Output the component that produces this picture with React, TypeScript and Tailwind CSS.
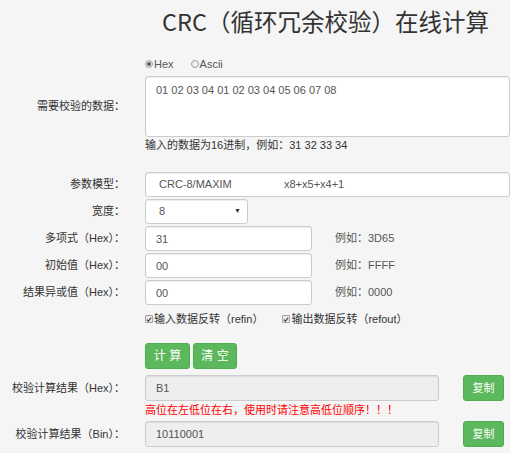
import React from "react";

const labelCls = "w-[130px] shrink-0 pr-[5px] text-right text-[11px] text-[#333]";
const inputCls =
  "h-[25px] rounded-[3px] border border-[#ccc] px-[10px] text-[11px] text-[#555] shadow-[inset_0_1px_1px_rgba(0,0,0,0.075)] outline-none";

function Radio({ checked, label }: { checked?: boolean; label: string }) {
  return (
    <label className="flex items-center">
      <span className="flex h-[8px] w-[8px] items-center justify-center rounded-full border border-[#a0a0a0] bg-[#f0f0f0]">
        {checked && <span className="h-[4px] w-[4px] rounded-full bg-[#555]" />}
      </span>
      <span className="ml-px">{label}</span>
    </label>
  );
}

function Check({ label }: { label: string }) {
  return (
    <label className="flex items-center">
      <span className="flex h-[8px] w-[8px] items-center justify-center rounded-[1px] border border-[#a0a0a0] bg-[#e8e8e8]">
        <svg viewBox="0 0 8 8" className="h-[7px] w-[7px]">
          <path d="M1.2 4.2 L3.2 6.2 L6.8 1.6" fill="none" stroke="#333" strokeWidth="1.4" />
        </svg>
      </span>
      <span className="ml-px">{label}</span>
    </label>
  );
}

function ParamRow({ label, value, example }: { label: string; value: string; example: string }) {
  return (
    <div className="mt-[2px] flex items-center">
      <div className={labelCls}>{label}</div>
      <input className={`${inputCls} ml-[15px] w-[167px] bg-white`} defaultValue={value} />
      <span className="ml-[23px] text-[11px] text-[#555]">{example}</span>
    </div>
  );
}

function ResultRow({ label, value }: { label: string; value: string }) {
  return (
    <div className="flex items-center">
      <div className={labelCls}>{label}</div>
      <input
        readOnly
        className={`${inputCls} ml-[15px] h-[26px] w-[294px] bg-[#eee]`}
        defaultValue={value}
      />
      <button className="ml-[24px] h-[26px] w-[41px] rounded-[3px] border border-[#4cae4c] bg-[#5cb85c] text-[11px] text-white">
        复制
      </button>
    </div>
  );
}

export default function App() {
  return (
    <div
      className="min-h-screen w-[510px] overflow-hidden bg-[#f5f5f5] text-[11px] text-[#333]"
      style={{ fontFamily: '"Liberation Sans", "Noto Sans CJK SC", sans-serif' }}
    >
      <h1
        className="pl-[162px] pt-[6px] text-[23.5px] font-normal leading-[30px] whitespace-nowrap text-[#333]"
        style={{ fontFamily: '"Noto Sans CJK SC", sans-serif' }}
      >
        CRC（循环冗余校验）在线计算
      </h1>

      {/* 数据输入 */}
      <div className="mt-[21px] flex h-[14px] items-center gap-[17px] pl-[145px] text-[#555]">
        <Radio checked label="Hex" />
        <Radio label="Ascii" />
      </div>
      <div className="mt-[5px] flex items-center">
        <div className={labelCls}>需要校验的数据：</div>
        <textarea
          className={`${inputCls} ml-[15px] h-[61px] w-[420px] resize-none bg-white pt-[5px] leading-[16px]`}
          defaultValue="01 02 03 04 01 02 03 04 05 06 07 08"
        />
      </div>
      <div className="mt-px flex h-[14px] items-center pl-[145px] text-[#333]">
        输入的数据为16进制，例如：31 32 33 34
      </div>

      {/* 参数 */}
      <div className="mt-[20px] flex items-center">
        <div className={labelCls}>参数模型：</div>
        <div className={`${inputCls} ml-[15px] flex w-[420px] items-center bg-white pl-[13px]`}>
          <span className="w-[125px]">CRC-8/MAXIM</span>
          <span>x8+x5+x4+1</span>
        </div>
      </div>
      <div className="mt-[2px] flex items-center">
        <div className={labelCls}>宽度：</div>
        <div className={`${inputCls} ml-[15px] flex w-[103px] items-center justify-between bg-white pl-[13px] pr-[6px]`}>
          <span>8</span>
          <span className="text-[7px] text-[#333]">▼</span>
        </div>
      </div>
      <ParamRow label="多项式（Hex）：" value="31" example="例如：3D65" />
      <ParamRow label="初始值（Hex）：" value="00" example="例如：FFFF" />
      <ParamRow label="结果异或值（Hex）：" value="00" example="例如：0000" />

      <div className="mt-[7px] flex h-[14px] items-center gap-[19px] pl-[145px] text-[#333]">
        <Check label="输入数据反转（refin）" />
        <Check label="输出数据反转（refout）" />
      </div>

      {/* 操作 */}
      <div className="mt-[17px] flex gap-[3px] pl-[145px]">
        <button className="h-[26px] w-[45px] rounded-[3px] border border-[#4cae4c] bg-[#5cb85c] text-[12px] text-white">
          计 算
        </button>
        <button className="h-[26px] w-[44px] rounded-[3px] border border-[#4cae4c] bg-[#5cb85c] text-[12px] text-white">
          清 空
        </button>
      </div>

      {/* 结果 */}
      <div className="mt-[6px]">
        <ResultRow label="校验计算结果（Hex）：" value="B1" />
      </div>
      <div className="mt-[2px] flex h-[14px] items-center pl-[145px] text-[#f00]">
        高位在左低位在右，使用时请注意高低位顺序！！！
      </div>
      <div className="mt-[4px]">
        <ResultRow label="校验计算结果（Bin）：" value="10110001" />
      </div>
    </div>
  );
}
